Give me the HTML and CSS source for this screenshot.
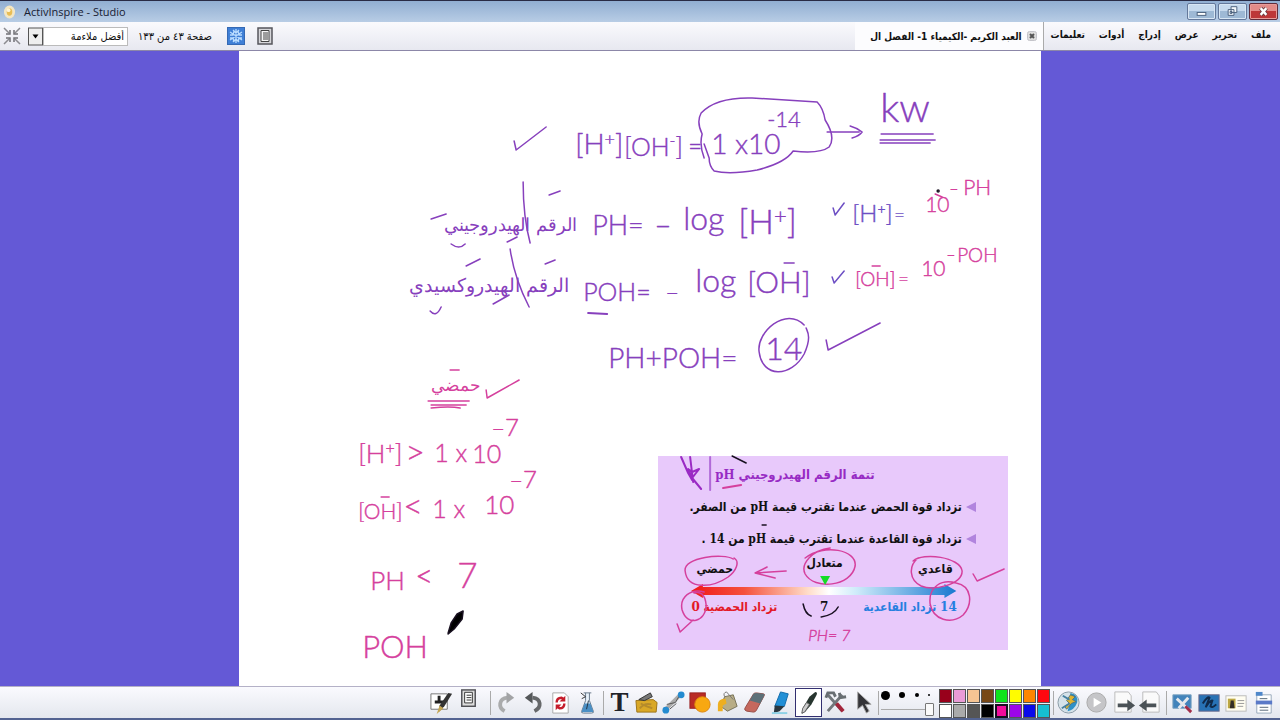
FILE: index.html
```html
<!DOCTYPE html>
<html lang="ar">
<head>
<meta charset="utf-8">
<title>ActivInspire - Studio</title>
<link rel="stylesheet" href="styles.css">
</head>
<body>
<div class="app">
  <header class="titlebar">
    <svg class="app-icon" viewBox="0 0 14 14" aria-hidden="true"><ellipse cx="7" cy="7" rx="6" ry="7" fill="#f3e6c4"/><ellipse cx="7" cy="7" rx="3" ry="4" fill="#e8bd55"/><circle cx="6" cy="5" r="2" fill="#fff4d5"/></svg>
    <h1 class="app-title">ActivInspire - Studio</h1>
    <div class="window-controls">
      <button class="win" aria-label="Minimize"><svg viewBox="0 0 28 15"><rect x="9.500" y="8.500" width="9" height="3" fill="#fff" stroke="#4c617e"/></svg></button>
      <button class="win" aria-label="Restore"><svg viewBox="0 0 28 15"><path d="M12.500 2.500h6v6h-6zM9.500 5.500h6v6h-6z" fill="#f4f8fc" stroke="#4c617e"/><path d="M11.500 7.500h2v2h-2z" fill="none" stroke="#4c617e"/></svg></button>
      <button class="win close" aria-label="Close"><svg viewBox="0 0 28 15"><path d="M11 4l6 7M17 4l-6 7" stroke="#663a3f" stroke-width="4"/><path d="M11 4l6 7M17 4l-6 7" stroke="#fff" stroke-width="2.400"/></svg></button>
    </div>
  </header>

  <div class="topbar" dir="rtl">
    <nav class="menu" aria-label="القائمة">
      <button>ملف</button><button>تحرير</button><button>عرض</button><button>إدراج</button><button>أدوات</button><button>تعليمات</button>
    </nav>
    <div class="tab">
      <button class="tab-close" aria-label="إغلاق"><svg viewBox="0 0 10 10"><rect x=".5" y=".5" width="9" height="9" rx="2" fill="#ddd" stroke="#c4c4ca"/><path d="M3 3l4 4M7 3L3 7" stroke="#555" stroke-width="2"/></svg></button>
      <span class="tab-name">العبد الكريم -الكيمياء 1- الفصل ال</span>
    </div>
    <div class="view-tools">
      <button class="mini" aria-label="ملاحظات"><svg viewBox="0 0 16 18"><rect x="1" y="1" width="14" height="16" fill="#d6d6da" stroke="#56565c" stroke-width="1.500"/><path d="M4 3.500h8v11H4zM6 6h5M6 8h5M6 10h5M6 12h5" fill="#f5f5f5" stroke="#444"/></svg></button>
      <button class="mini snow" aria-label="تجميد"><svg viewBox="0 0 18 18"><rect x=".5" y=".5" width="17" height="17" fill="#3f7fd6" stroke="#3569b4"/><path d="M9 2v14M3 5l12 8M15 5L3 13M6 3l3 3 3-3M6 15l3-3 3 3M3 8h3l1-4M15 8h-3l-1-4M3 11h3l1 4M15 11h-3l-1 4" fill="none" stroke="#b9dcff" stroke-width="1.300"/></svg></button>
      <span class="page-no">صفحة ٤٣ من ١٣٣</span>
      <label class="zoom"><select aria-label="حجم الصفحة"><option>أفضل ملاءمة</option></select><svg viewBox="0 0 15 18" aria-hidden="true"><rect x=".5" y=".5" width="14" height="17" fill="#eee" stroke="#555"/><path d="M4.500 7h6l-3 4z" fill="#000"/></svg></label>
      <button class="mini fit" aria-label="ملء الشاشة"><svg viewBox="0 0 20 18"><path d="M2 1l5 5M18 1l-5 5M2 17l5-5M18 17l-5-5" stroke="#8b8b90" stroke-width="1.500"/><path d="M8 3v4H4M12 3v4h4M8 15v-4H4M12 15v-4h4" fill="none" stroke="#707075" stroke-width="1.500"/></svg></button>
    </div>
  </div>

  <main class="desk">
    <section class="sheet">
      <article class="card" dir="rtl">
        <h2>تتمة الرقم الهيدروجيني <span class="latin">pH</span></h2>
        <ul>
          <li>تزداد قوة الحمض عندما تقترب قيمة <span class="latin">pH</span> من الصفر.</li>
          <li>تزداد قوة القاعدة عندما تقترب قيمة <span class="latin">pH</span> من <span class="latin">14</span> .</li>
        </ul>
        <div class="scale-names"><b>قاعدي</b><b class="mid">متعادل</b><b class="end">حمضي</b></div>
        <svg class="scale-bar" viewBox="0 0 268 16" preserveAspectRatio="none" aria-hidden="true">
          <defs><linearGradient id="ph"><stop offset="0" stop-color="#f01818"/><stop offset=".2" stop-color="#f5503c"/><stop offset=".44" stop-color="#ffdcc8"/><stop offset=".52" stop-color="#fff"/><stop offset=".62" stop-color="#d0ecfa"/><stop offset="1" stop-color="#1878d0"/></linearGradient></defs>
          <path d="M0 8L12 1v3h244V1l12 7-12 7v-3H12v3z" fill="url(#ph)"/>
        </svg>
        <div class="scale-values"><b class="base"><span class="latin">14</span> تزداد القاعدية</b><b class="latin">7</b><b class="acid end">تزداد الحمضية <span class="latin">0</span></b></div>
      </article>
      <svg class="ink" viewBox="239 51 801 635" preserveAspectRatio="xMidYMin meet">
        <g class="violet">
          <path d="M514 141l2 9 30-23"/>
          <g class="hand">
            <text x="575" y="154" font-size="28">[H<tspan dy="-9" font-size="18">+</tspan><tspan dy="9">]</tspan></text>
            <text x="624" y="156" font-size="25">[OH<tspan dy="-10" font-size="16">-</tspan><tspan dy="10">]</tspan></text>
            <text x="688" y="155" font-size="24">=</text>
            <text x="711" y="154" font-size="28">1 x10</text>
            <text x="767" y="127" font-size="22">-14</text>
            <text x="880" y="122" font-size="40">kw</text>
            <text x="592" y="235" font-size="27">PH=</text>
            <text x="654" y="235" font-size="30">–</text>
            <text x="683" y="230" font-size="32">log</text>
            <text x="738" y="234" font-size="34">[H<tspan dy="-10" font-size="22">+</tspan><tspan dy="10">]</tspan></text>
            <text x="583" y="301" font-size="25">POH=</text>
            <text x="665" y="300" font-size="24">–</text>
            <text x="695" y="292" font-size="32">log</text>
            <text x="747" y="293" font-size="30">[OH]</text>
            <text x="608" y="368" font-size="28">PH+POH=</text>
            <text x="765" y="360" font-size="32">14</text>
            <text class="script" x="444" y="231" font-size="18">الرقم الهيدروجيني</text>
            <text class="script" x="409" y="292" font-size="19">الرقم الهيدروكسيدي</text>
          </g>
          <path d="M704 158Q699 145 702 134 696 122 701 113 716 97 752 98 784 100 817 102 823 108 825 120 836 137 829 147 820 154 793 151 785 163 757 170 729 175 714 171 709 166 709 158L704 144"/>
          <path d="M827 132h32M850 126q7 2 12 6-3 4-10 6M881 134h52M880 140h55M880 143h50"/>
          <path d="M523 182q0 35 7 61"/><path d="M549 195l11-4M431 219l15-5M451 244q8 6 14 0M507 242l10-5"/>
          <path d="M510 249q4 29 19 58M545 264l10-4M466 266l14-7M430 311q6 7 11-4M493 304l16-9"/>
          <path class="thick" d="M588 313l19 1"/><path d="M784 263h10"/>
          <path d="M804 325C786 306 756 332 759 352 762 378 791 378 804 354 812 337 807 331 806 328M826 340l2 10 52-27"/>
        </g>
        <g class="indigo">
          <path d="M833 208l2 7 9-12M832 277l2 6 10-12"/>
          <g class="hand"><text x="852" y="222" font-size="24">[H<tspan dy="-8" font-size="14">+</tspan><tspan dy="8">]</tspan></text><text x="894" y="221" font-size="18">=</text></g>
        </g>
        <g class="pink">
          <g class="hand">
            <text x="925" y="212" font-size="21">10</text><text x="949" y="194" font-size="16">–</text><text x="963" y="195" font-size="21">PH</text>
            <text x="855" y="286" font-size="19">[OH]</text><text x="898" y="285" font-size="18">=</text><text x="921" y="276" font-size="21">10</text><text x="946" y="260" font-size="16">–</text><text x="957" y="262" font-size="19">POH</text>
            <text class="script" x="431" y="391" font-size="17">حمضي</text>
            <text x="358" y="463" font-size="26">[H<tspan dy="-9" font-size="16">+</tspan><tspan dy="9">]</tspan></text><text x="405" y="464" font-size="34">&gt;</text><text x="434" y="462" font-size="25">1 x</text><text x="472" y="463" font-size="25">10</text><text x="491" y="436" font-size="24">–7</text>
            <text x="358" y="519" font-size="21">[OH]</text><text x="403" y="518" font-size="34">&lt;</text><text x="432" y="518" font-size="25">1 x</text><text x="484" y="514" font-size="26">10</text><text x="509" y="488" font-size="24">–7</text>
            <text x="370" y="590" font-size="26">PH</text><text x="415" y="587" font-size="31">&lt;</text><text x="457" y="588" font-size="35">7</text>
            <text x="362" y="658" font-size="31">POH</text>
            <text class="slant" x="808" y="641" font-size="16">PH= 7</text>
          </g>
          <path d="M872 266h8M381 497h8M450 370h9M486 390l1 8 32-18M428 401h41M431 405h35M431 408q19-2 29 0M935 194l7 3"/>
          <path class="thick" d="M723 488l18-3"/>
          <path d="M733 559C724 553 683 557 685 571 687 590 712 588 728 577 736 571 740 562 734 558M805 558C824 543 857 550 855 566 851 587 814 590 805 574 800 564 812 550 830 548M913 561C923 552 960 557 962 571 962 585 933 591 921 586 909 580 908 566 918 558M930 604C928 586 942 579 956 583 972 586 973 604 963 615 951 625 933 620 930 604M704 592C691 588 679 597 682 610 687 627 706 622 706 605 705 594 700 591 694 593M677 624l3 8 13-12M973 574l4 7 27-12"/>
          <path d="M786 571l-30 2M767 567l-12 6 20 5"/>
        </g>
        <path class="marker" d="M820 576h10l-5 9z"/>
        <g class="black"><path d="M732 456l14 7M803 604q2 10 8 12M821 617q13-2 17-10M762 525h4"/><circle cx="938" cy="191" r="1"/><path class="nib" d="M448 633l3-10 6-9 6-3-1 8-8 10-6 5z"/><path class="purple-nib" d="M681 457l7 16 4 7M690 457l3 25M688 469l4 9 7-9-7 3zM692 478l9 11"/><path class="rule" d="M710 457v33"/></g>
      </svg>
    </section>
  </main>

  <footer class="toolbar">
    <button class="tool" aria-label="Desktop annotate"><svg viewBox="0 0 26 26"><path d="M2 4h17v16H2z" fill="#fff" stroke="#777"/><path d="M9 6h3v5h4v3H6v-3h3z" fill="#222"/><path d="M24 4l-8 13-6 6 1-7 9-13z" fill="#333"/><path d="M11 16l-3 9 7-6z" fill="#c5a652"/></svg></button>
    <button class="tool raised" aria-label="Menu"><svg viewBox="0 0 26 26"><rect x="6" y="2" width="14" height="17" fill="#ddd" stroke="#505055" stroke-width="1.500"/><path d="M9 4.500h8v11H9zM11 7.500h5M11 10h5M11 12.500h5" fill="#fff" stroke="#333"/></svg></button>
    <span class="sep wide"></span>
    <button class="tool" aria-label="Undo"><svg viewBox="0 0 26 26"><path d="M11 22C4 18 5 9 14 8" fill="none" stroke="#aaabac" stroke-width="4"/><path d="M13 2l8 6-8 6z" fill="#a2a3a5"/></svg></button>
    <button class="tool" aria-label="Redo"><svg viewBox="0 0 26 26"><path d="M14 22C22 18 21 9 12 8" fill="none" stroke="#66686a" stroke-width="4"/><path d="M12 2L4 8l8 6z" fill="#55585a"/></svg></button>
    <button class="tool" aria-label="Reset page"><svg viewBox="0 0 26 26"><path d="M5 3h12l4 4v17H5z" fill="#fff" stroke="#aaa"/><path d="M9 13q0-5 5-5l3 2M17 14q0 5-5 5l-3-2" fill="none" stroke="#c51d2b" stroke-width="2.500"/><path d="M18 6v6h-6zM8 21v-6h6z" fill="#c51d2b"/></svg></button>
    <button class="tool" aria-label="Clear"><svg viewBox="0 0 26 26"><path d="M9 3h8M11 3v8L7 22q-1 2 2 2h8q3 0 2-2l-4-11V3" fill="#e8f2fa" stroke="#678"/><path d="M10 14h6l3 8q0 1-1 1H8q-1 0-1-1z" fill="#4a8fc4"/><path d="M6 3l5 4-4 2" fill="none" stroke="#333"/><path d="M14 11l-2 9" stroke="#234"/></svg></button>
    <span class="sep"></span>
    <button class="tool letter" aria-label="Text">T</button>
    <button class="tool" aria-label="Resources"><svg viewBox="0 0 26 26"><path d="M2 11l18-1 4 3-1 10H3z" fill="#d9a827" stroke="#9c7418"/><path d="M5 10L17 3l2 4-8 4z" fill="#777" stroke="#333"/><path d="M6 19q5-6 12-4M7 14q5 3 12 5" stroke="#b58b2b" stroke-width="2" fill="none"/></svg></button>
    <button class="tool" aria-label="Connector"><svg viewBox="0 0 26 26"><path d="M5 20L20 5" stroke="#aaa" stroke-width="4"/><path d="M6 15l9-2 4-7M9 20l7-6" stroke="#555" fill="none"/><circle cx="21" cy="5" r="3.500" fill="#248bd0"/><circle cx="5" cy="21" r="3.500" fill="#248bd0"/></svg></button>
    <button class="tool" aria-label="Shape"><svg viewBox="0 0 26 26"><rect x="2" y="3" width="16" height="16" fill="#b92b25" stroke="#922"/><circle cx="15" cy="15" r="8" fill="#f8a811" stroke="#dc850b"/></svg></button>
    <button class="tool" aria-label="Fill"><svg viewBox="0 0 26 26"><path d="M10 7l9-2 4 12-10 5-7-5z" fill="#b8ad86" stroke="#777158"/><path d="M10 7q-2-4 2-5l7 8" fill="none" stroke="#777"/><path d="M11 9q-8 0-8 6v7h5v-6l4-2z" fill="#eeaf20"/></svg></button>
    <button class="tool" aria-label="Eraser"><svg viewBox="0 0 26 26"><path d="M12 4q1-1 3-1l7 1q2 0 1 2l-8 15q-1 2-3 2l-7-1q-3-1-2-3z" fill="#c5685d" stroke="#954d47"/><path d="M12 4q1-1 3-1l7 1q2 0 1 2l-4 8-11-3z" fill="#5d7078"/></svg></button>
    <button class="tool" aria-label="Highlighter"><svg viewBox="0 0 26 26"><path d="M12 2l8 2-4 13-10 0z" fill="#218fd6" stroke="#126bab"/><path d="M6 16l10 1-5 5-6 2z" fill="#29363f"/><path d="M3 24h16" stroke="#8ed1e5" stroke-width="2"/></svg></button>
    <button class="tool selected" aria-label="Pen"><svg viewBox="0 0 26 26"><path d="M20 2q3 0 1 4l-5 9-6 7-4 3 1-6 7-12z" fill="#27352f"/><path d="M11 13l3 2-5 8-3 1 1-5z" fill="#ccc" stroke="#666"/></svg></button>
    <button class="tool" aria-label="More tools"><svg viewBox="0 0 26 26"><path d="M5 5l15 17M20 5L5 22" stroke="#72777b" stroke-width="3"/><path d="M3 8l2-5 6 0 2 4M17 3l1 5 6-1" fill="none" stroke="#686e72" stroke-width="3"/><path d="M14 14l7 8" stroke="#a3253b" stroke-width="4"/></svg></button>
    <button class="tool" aria-label="Select"><svg viewBox="0 0 26 26"><path d="M8 2v18l5-4 4 8 3-2-4-7h6z" fill="#343438" stroke="#aaa"/></svg></button>
    <span class="sep"></span>
    <div class="width-picker">
      <div class="dots" aria-hidden="true"><i class="d1"></i><i class="d2"></i><i class="d3"></i><i class="d4"></i></div>
      <input type="range" min="0" max="100" value="100" aria-label="Pen width">
    </div>
    <div class="swatches">
      <button class="c-wine" aria-label="Dark red"></button><button class="c-orchid" aria-label="Orchid"></button><button class="c-peach" aria-label="Peach"></button><button class="c-brown" aria-label="Brown"></button><button class="c-green" aria-label="Green"></button><button class="c-yellow" aria-label="Yellow"></button><button class="c-orange" aria-label="Orange"></button><button class="c-red" aria-label="Red"></button>
      <button class="c-white" aria-label="White"></button><button class="c-silver" aria-label="Silver"></button><button class="c-gray" aria-label="Gray"></button><button class="c-black" aria-label="Black"></button><button class="c-pink chosen" aria-label="Pink"></button><button class="c-purple" aria-label="Purple"></button><button class="c-blue" aria-label="Blue"></button><button class="c-cyan" aria-label="Cyan"></button>
    </div>
    <span class="sep"></span>
    <button class="tool" aria-label="Browser"><svg viewBox="0 0 26 26"><circle cx="12" cy="13" r="11" fill="#d5e2e9" stroke="#899aa5"/><path d="M14 3q9 2 7 10-3 8-10 9l2-7 5-3-5-3z" fill="#2e91c7"/><path d="M14 5l5 2-3 3 4 2-5 2-5 6-2-3 5-3-3-3z" fill="#dfb42f" stroke="#50737d"/><path d="M6 6l7 4M5 19l8-5" stroke="#4681a1" stroke-width="2"/></svg></button>
    <button class="tool" aria-label="Play"><svg viewBox="0 0 26 26"><circle cx="13" cy="13" r="10" fill="#c5c5c8" stroke="#aaa"/><path d="M10 8l8 5-8 5z" fill="#fff"/></svg></button>
    <button class="tool" aria-label="Next page"><svg viewBox="0 0 26 26"><path d="M4 2h14l3 4v17H4z" fill="#fafafa" stroke="#bbb"/><path d="M7 14h10v-4l8 6-8 6v-4H7z" fill="#4b5257"/></svg></button>
    <button class="tool" aria-label="Previous page"><svg viewBox="0 0 26 26"><path d="M5 2h14l3 4v17H5z" fill="#fafafa" stroke="#bbb"/><path d="M19 14H9v-4l-8 6 8 6v-4h10z" fill="#4b5257"/></svg></button>
    <span class="sep"></span>
    <button class="tool" aria-label="Desktop tools"><svg viewBox="0 0 26 26"><path d="M3 5h19v14H3z" fill="#4283bb" stroke="#7da3c2"/><path d="M7 9l13 12M19 8L9 19" stroke="#e5e8ed" stroke-width="3"/><path d="M16 17l6 6" stroke="#a22e49" stroke-width="3"/></svg></button>
    <button class="tool" aria-label="Handwriting"><svg viewBox="0 0 26 26"><rect x="2" y="5" width="21" height="17" fill="#2872b5" stroke="#668"/><path d="M6 14q5-8 7-6l-4 10q5-8 7-7l-2 6q2 2 6-2" fill="none" stroke="#102a4a" stroke-width="2"/></svg></button>
    <button class="tool" aria-label="Profile"><svg viewBox="0 0 26 26"><rect x="2" y="6" width="21" height="16" fill="#fffdf1" stroke="#bbb"/><path d="M4 9h8v10H4z" fill="#bca744"/><path d="M6 19l1-8h3l1 8z" fill="#332d25"/><path d="M14 11h7M14 14h7M14 17h6" stroke="#999"/></svg></button>
    <button class="tool" aria-label="Command list"><svg viewBox="0 0 26 26"><path d="M6 5h15v19H6z" fill="#fff" stroke="#9ab"/><path d="M5 2h7v4H5z" fill="#4f87ca"/><path d="M5 11h17v4H5z" fill="#5a79c8"/><path d="M9 9h8M9 18h9M9 21h9" stroke="#567"/></svg></button>
  </footer>
</div>
</body>
</html>
```
FILE: styles.css
```css
* { box-sizing: border-box; }
body { margin: 0; font-family: "DejaVu Sans", sans-serif; color: #111; }
button { border: 0; padding: 0; background: none; color: inherit; font: inherit; }
svg { display: block; }
.app { min-height: 100vh; display: flex; flex-direction: column; }

.titlebar { height: 22px; display: flex; align-items: center; gap: 8px; padding: 0 2px 0 3px; border-top: 1px solid #292b45; background: linear-gradient(#91aed2, #b8cde5); }
.app-icon { width: 13px; height: 14px; }
.app-title { flex: 1; margin: 0; font: 11px "Open Sans", sans-serif; color: #172032; }
.window-controls { display: flex; gap: 2px; }
.win { width: 29px; height: 17px; border: 1px solid #64789a; border-radius: 2px; background: linear-gradient(#c6d9ed 50%, #9eb9d5 50%); box-shadow: inset 0 0 0 1px #d8e6f4; }
.win svg { width: 27px; height: 15px; }
.win.close { border-color: #612d3b; background: linear-gradient(#e28b88 50%, #bd3738 50%); box-shadow: inset 0 0 0 1px #e79c99; }

.topbar { height: 29px; display: flex; align-items: stretch; padding: 0 2px; background: linear-gradient(#fafafd, #e7e8f0); border-bottom: 1px solid #8c87a8; }
.menu { display: flex; align-items: center; gap: 14px; padding: 0 7px 4px 7px; border-left: 1px solid #aaa; font: bold 10px "DejaVu Sans Condensed", "DejaVu Sans", sans-serif; }
.tab { display: flex; align-items: center; gap: 5px; width: 188px; padding: 0 6px; background: #fcfcfe; overflow: hidden; white-space: nowrap; }
.tab-close { flex: none; width: 10px; }
.tab-name { font: bold 10px "DejaVu Sans Condensed", "DejaVu Sans", sans-serif; }
.view-tools { flex: 1; display: flex; align-items: center; justify-content: flex-end; }
.mini { width: 16px; margin-left: 12px; }
.mini.snow { width: 18px; margin-left: 15px; }
.mini.fit { width: 20px; margin: 0 6px 0 0; }
.page-no { margin-left: 10px; font: 11px "DejaVu Sans Condensed", "DejaVu Sans", sans-serif; white-space: nowrap; }
.zoom { display: flex; width: 100px; height: 19px; }
.zoom svg { width: 15px; height: 19px; flex: none; }
.zoom select { flex: 1; min-width: 0; appearance: none; padding: 0 3px; border: 1px solid #bbb; background: #fff; color: #111; font: 11px "DejaVu Sans Condensed", "DejaVu Sans", sans-serif; }

.desk { flex: 1; display: flex; justify-content: center; background: #6459d6; }
.sheet { position: relative; width: 62.6%; background: #fff; }
.ink { position: absolute; inset: 0; width: 100%; height: 100%; pointer-events: none; fill: none; stroke-width: 1.5; stroke-linecap: round; stroke-linejoin: round; }
.violet { stroke: #8740bd; color: #8740bd; }
.indigo { stroke: #6d4fc4; color: #6d4fc4; }
.pink { stroke: #d5409d; color: #d5409d; }
.black { stroke: #181020; }
.hand { font-family: Lato, sans-serif; font-weight: 300; fill: currentColor; stroke: currentColor; stroke-width: 0.4; }
.script { font-family: "DejaVu Sans", sans-serif; stroke: none; }
.slant { font-style: italic; }
.thick { stroke-width: 2; }
.marker { fill: #16dc25; }
.nib { fill: #000; }
.purple-nib { stroke: #9a2ac4; stroke-width: 2; }
.rule { stroke: #b06ad8; stroke-width: 2; }

.card { position: absolute; left: 52.3%; top: 63.8%; width: 43.6%; height: 30.5%; padding: 6px 46px 0 18px; background: #e8c9fb; font: bold 12px "DejaVu Sans Condensed", "DejaVu Sans", sans-serif; white-space: nowrap; }
.latin { font-family: "DejaVu Serif", serif; }
.card h2 { margin: 0 87px 3px 0; font-size: 13px; line-height: 26px; color: #972bc4; }
.card h2 .latin, .card li .latin { font-family: "DejaVu Serif Condensed", "DejaVu Serif", serif; }
.card ul { margin: 0; padding: 0; list-style: none; }
.card li { position: relative; line-height: 32px; font-size: 12px; }
.card li::before { content: ""; position: absolute; right: -14px; top: 11px; border: 5px solid transparent; border-left: 0; border-right: 10px solid #b184de; }
.scale-names, .scale-values { display: grid; grid-template-columns: 1fr auto 1fr; }
.scale-names { padding: 0 9px 0 20px; line-height: 28px; }
.mid { line-height: 16px; }
.end { text-align: left; }
.scale-bar { width: calc(100% - 20px); height: 16px; margin: 0 5px 0 15px; }
.scale-values { margin: 0 5px 0 15px; line-height: 16px; }
.base { color: #267fe0; }
.acid { color: #e31927; }

.toolbar { height: 34px; display: flex; align-items: center; justify-content: flex-end; padding-right: 3px; border-top: 1px solid #b4b1c7; border-bottom: 2px solid #536391; background: linear-gradient(#fafafe, #e4e7ee); }
.tool { flex: none; width: 27px; height: 29px; }
.tool svg { width: 25px; height: 25px; margin: auto; }
.raised { padding-bottom: 4px; }
.tool.selected { border: 1px solid #322f70; background: #fff; }
.letter { font: bold 27px/27px "Liberation Serif", serif; color: #202228; }
.sep { width: 1px; height: 24px; margin: 0 2px; background: #aaa; }
.sep.wide { margin: 0 2px 0 8px; }
.width-picker { width: 57px; padding-right: 4px; }
.dots { display: flex; align-items: center; justify-content: space-between; height: 12px; padding-right: 4px; }
.dots i { border-radius: 50%; background: #000; }
.d1 { width: 9px; height: 9px; }
.d2 { width: 6px; height: 6px; }
.d3 { width: 4px; height: 4px; }
.d4 { width: 2px; height: 2px; }
.width-picker input { display: block; appearance: none; width: 100%; height: 14px; margin: 1px 0 0; background: linear-gradient(#aaa, #aaa) center / 100% 1px no-repeat; }
.width-picker input::-webkit-slider-thumb { appearance: none; width: 9px; height: 13px; border: 1px solid #777; border-radius: 1px; background: #fafafa; }
.swatches { display: grid; grid-template-columns: repeat(8, 14px); grid-auto-rows: 15px; margin-right: 1px; }
.swatches button { margin: 1px 0 0 1px; border: 1px solid #555; }
.c-wine { background: #98001b; }
.c-orchid { background: #e99bd6; }
.c-peach { background: #f5c493; }
.c-brown { background: #784817; }
.c-green { background: #0ee31c; }
.c-yellow { background: #fffc00; }
.c-orange { background: #ff8500; }
.c-red { background: #ff0810; }
.c-white { background: #fff; }
.c-silver { background: #aaa; }
.c-gray { background: #555; }
.c-black { background: #000; }
.c-pink { background: #f20b9b; }
.c-purple { background: #9c06e8; }
.c-blue { background: #0909ea; }
.c-cyan { background: #16bfd2; }
.swatches .chosen { border: 2px solid #171020; }
```
